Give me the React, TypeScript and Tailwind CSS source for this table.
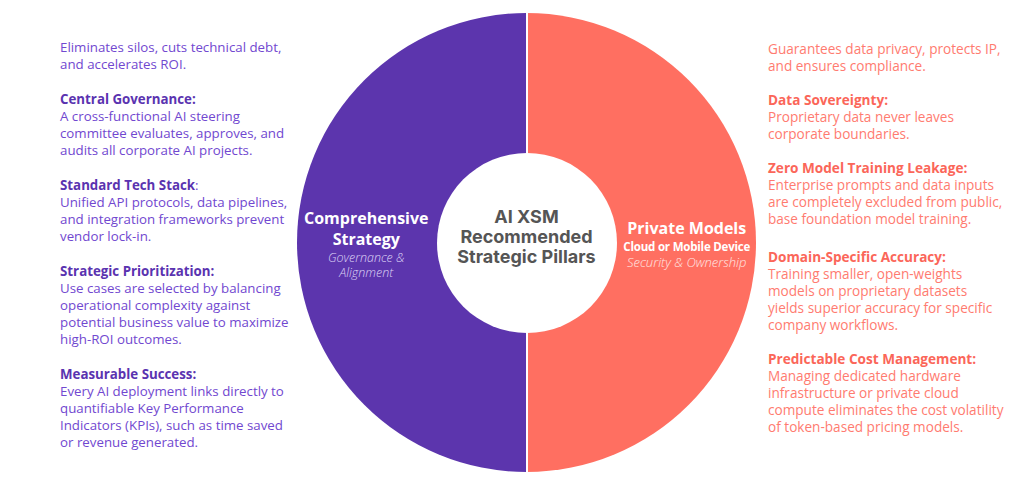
const leftItems = [
  {
    title: "",
    lines: ["Eliminates silos, cuts technical debt,", "and accelerates ROI."],
  },
  {
    title: "Central Governance:",
    lines: [
      "A cross-functional AI steering",
      "committee evaluates, approves, and",
      "audits all corporate AI projects.",
    ],
  },
  {
    title: "Standard Tech Stack",
    tail: ":",
    lines: [
      "Unified API protocols, data pipelines,",
      "and integration frameworks prevent",
      "vendor lock-in.",
    ],
  },
  {
    title: "Strategic Prioritization:",
    lines: [
      "Use cases are selected by balancing",
      "operational complexity against",
      "potential business value to maximize",
      "high-ROI outcomes.",
    ],
  },
  {
    title: "Measurable Success:",
    lines: [
      "Every AI deployment links directly to",
      "quantifiable Key Performance",
      "Indicators (KPIs), such as time saved",
      "or revenue generated.",
    ],
  },
];

const rightItems = [
  {
    title: "",
    lines: ["Guarantees data privacy, protects IP,", "and ensures compliance."],
  },
  {
    title: "Data Sovereignty:",
    lines: ["Proprietary data never leaves", "corporate boundaries."],
  },
  {
    title: "Zero Model Training Leakage:",
    lines: [
      "Enterprise prompts and data inputs",
      "are completely excluded from public,",
      "base foundation model training.",
    ],
  },
  {
    title: "Domain-Specific Accuracy:",
    extra: "mt-[4px]",
    lines: [
      "Training smaller, open-weights",
      "models on proprietary datasets",
      "yields superior accuracy for specific",
      "company workflows.",
    ],
  },
  {
    title: "Predictable Cost Management:",
    lines: [
      "Managing dedicated hardware",
      "infrastructure or private cloud",
      "compute eliminates the cost volatility",
      "of token-based pricing models.",
    ],
  },
];

type Item = { title: string; tail?: string; extra?: string; lines: string[] };

function TextColumn({
  items,
  headClass,
  gapClass,
}: {
  items: Item[];
  headClass: string;
  gapClass: string;
}) {
  return (
    <div className={`flex flex-col ${gapClass}`}>
      {items.map((item, i) => (
        <p key={i} className={`whitespace-nowrap ${item.extra ?? ""}`}>
          {item.title && (
            <>
              <span className={`font-bold ${headClass}`}>{item.title}</span>
              {item.tail}
              <br />
            </>
          )}
          {item.lines.map((line, j) => (
            <span key={j}>
              {line}
              {j < item.lines.length - 1 && <br />}
            </span>
          ))}
        </p>
      ))}
    </div>
  );
}

export default function App() {
  return (
    <div className="w-[1024px] h-[487px] bg-white flex overflow-hidden font-['Open_Sans',sans-serif] leading-[17px]">
      <div className="w-[297px] shrink-0 pl-[60px] pt-[39px] text-[13.3px] text-[#7148d0]">
        <TextColumn items={leftItems} headClass="text-[#5a33b0]" gapClass="gap-[18px]" />
      </div>

      <div className="relative mt-[13px] w-[459px] h-[459px] shrink-0 rounded-full overflow-hidden flex gap-[2px]">
        <div className="flex-1 bg-[#5c35ad] flex items-center pr-[90px]">
          <div className="flex-1 flex flex-col items-center text-center pt-[2px]">
            <p className="text-white font-bold text-[16px] leading-[21px]">
              Comprehensive
              <br />
              Strategy
            </p>
            <p className="text-[#ddd3f5] italic text-[12.5px] leading-[15px] font-light">
              Governance &amp;
              <br />
              Alignment
            </p>
          </div>
        </div>
        <div className="flex-1 bg-[#ff6f61] flex items-center pl-[90px]">
          <div className="flex-1 flex flex-col items-center text-center pt-[2px]">
            <p className="text-white font-bold text-[16px] leading-[21px]">Private Models</p>
            <p className="text-white font-bold text-[11.5px] leading-[15px] tracking-[-0.2px]">
              Cloud or Mobile Device
            </p>
            <p className="text-[#ffe6e2] italic text-[13px] leading-[16px] font-light">
              Security &amp; Ownership
            </p>
          </div>
        </div>

        <div className="absolute left-1/2 top-1/2 -translate-x-1/2 -translate-y-1/2 w-[180px] h-[180px] rounded-full bg-white flex items-center justify-center pb-[12px]">
          <p className="text-center font-['Inter',sans-serif] font-bold text-[18px] leading-[20px] text-[#555555]">
            AI XSM
            <br />
            Recommended
            <br />
            Strategic Pillars
          </p>
        </div>
      </div>

      <div className="pl-[12px] pt-[40px] text-[13.6px] text-[#ff7b70]">
        <TextColumn items={rightItems} headClass="text-[#fb6659]" gapClass="gap-[17px]" />
      </div>
    </div>
  );
}
